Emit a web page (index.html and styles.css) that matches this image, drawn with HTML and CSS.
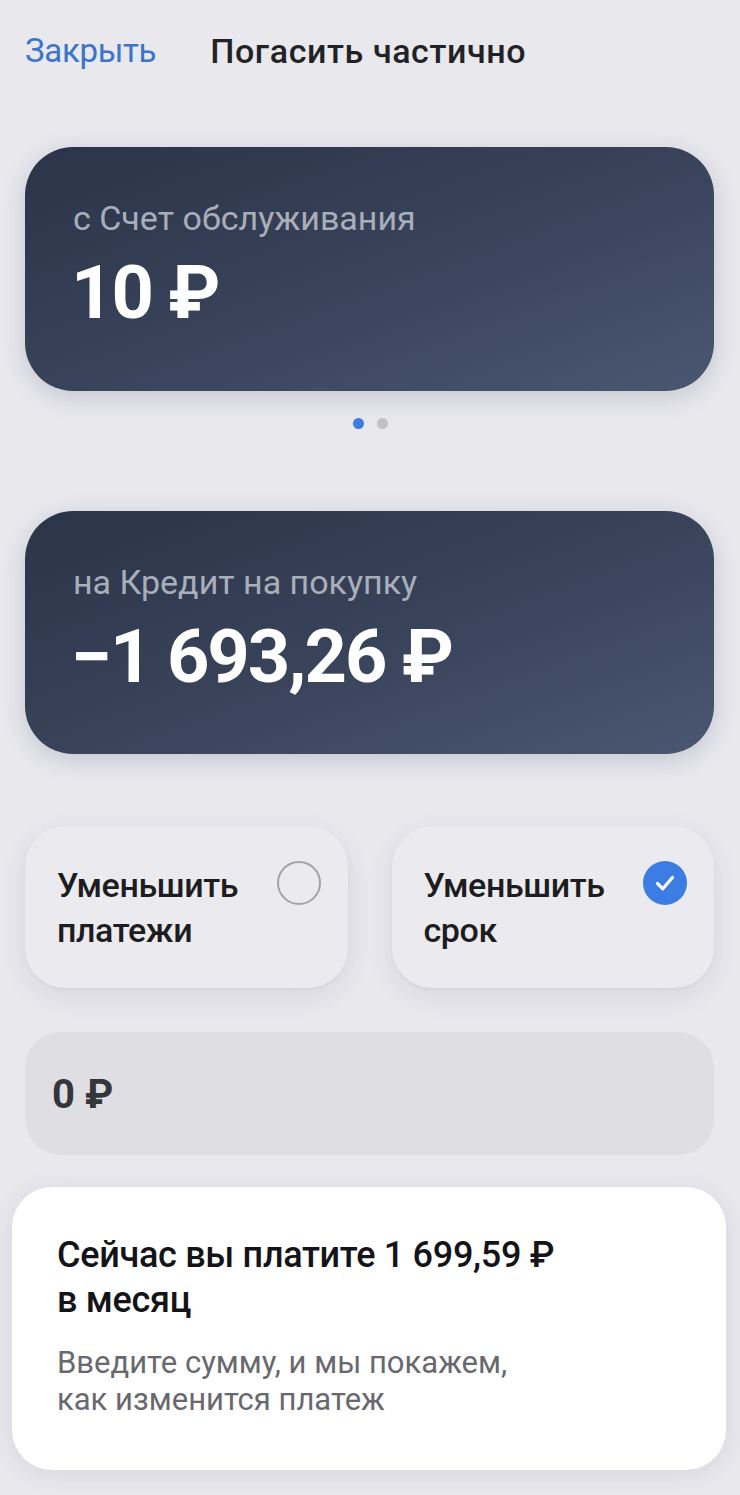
FILE: index.html
```
<!DOCTYPE html>
<html lang="ru">
<head>
<meta charset="utf-8">
<link rel="stylesheet" href="styles.css">
</head>
<body>
<div class="screen">
  <header class="header">
    <span class="close">Закрыть</span>
    <span class="title">Погасить частично</span>
  </header>

  <section class="account-card">
    <div class="account-label">с Счет обслуживания</div>
    <div class="account-amount">10 ₽</div>
  </section>

  <div class="dots">
    <span class="dot dot-active"></span>
    <span class="dot"></span>
  </div>

  <section class="account-card account-card-second">
    <div class="account-label">на Кредит на покупку</div>
    <div class="account-amount">−1 693,26 ₽</div>
  </section>

  <div class="options">
    <div class="option">
      <div class="option-text">Уменьшить<br>платежи</div>
      <span class="radio"></span>
    </div>
    <div class="option">
      <div class="option-text">Уменьшить<br>срок</div>
      <span class="radio radio-checked">
        <svg viewBox="0 0 44 44" width="44" height="44"><path d="M14.5 22.5 L19.8 27.8 L29.5 16.5" fill="none" stroke="#fff" stroke-width="3.2" stroke-linecap="round" stroke-linejoin="round"/></svg>
      </span>
    </div>
  </div>

  <div class="amount-input">0 ₽</div>

  <section class="info-card">
    <div class="info-title">Сейчас вы платите 1 699,59 ₽<br>в месяц</div>
    <div class="info-text">Введите сумму, и мы покажем,<br>как изменится платеж</div>
  </section>
</div>
</body>
</html>
```
FILE: styles.css
```
* { box-sizing: border-box; }
html, body {
  margin: 0;
  padding: 0;
}
body {
  background: #e8e8ed;
  font-family: Roboto, "Noto Sans", "Liberation Sans", sans-serif;
  width: 740px;
  height: 1495px;
  overflow: hidden;
}
.screen {
  display: flex;
  flex-direction: column;
}
.header {
  display: flex;
  align-items: flex-start;
  gap: 54px;
  padding: 31px 25px 0 25px;
  height: 147px;
}
.close {
  font-size: 33px;
  line-height: 40px;
  color: #3b74c9;
  letter-spacing: -0.3px;
}
.title {
  font-size: 34px;
  line-height: 40px;
  font-weight: 500;
  color: #222226;
  letter-spacing: 0.6px;
}
.account-card {
  margin: 0 26px 0 25px;
  height: 244px;
  border-radius: 48px;
  background: linear-gradient(160deg, #2b3448 0%, #384259 50%, #4b5672 100%);
  box-shadow: 0 6px 24px rgba(40, 50, 80, 0.18);
  padding: 51px 40px 0 48px;
  color: #fff;
}
.account-label {
  font-size: 34px;
  line-height: 40px;
  color: #a9aebb;
  letter-spacing: 0;
}
.account-amount {
  margin-top: 15px;
  margin-left: -2px;
  font-size: 74px;
  line-height: 80px;
  font-weight: 700;
  color: #ffffff;
  letter-spacing: -2px;
}
.dots {
  display: flex;
  justify-content: center;
  gap: 13px;
  height: 120px;
  padding-top: 27px;
}
.dot {
  width: 11px;
  height: 11px;
  border-radius: 50%;
  background: #c1c1c6;
}
.dot-active {
  background: #3b7de0;
}
.account-card-second {
  height: 243px;
}
.options {
  display: grid;
  grid-template-columns: 1fr 1fr;
  gap: 44px;
  margin: 72px 26px 0 25px;
}
.option {
  height: 162px;
  border-radius: 40px;
  background: #ebebef;
  box-shadow: 0 8px 26px rgba(60, 60, 90, 0.10), 0 1px 3px rgba(60, 60, 90, 0.05);
  display: flex;
  justify-content: space-between;
  align-items: flex-start;
  padding: 37px 27px 0 32px;
}
.option-text {
  font-size: 34px;
  line-height: 45px;
  font-weight: 500;
  color: #1d1d21;
  letter-spacing: -0.4px;
}
.radio {
  flex: none;
  width: 44px;
  height: 44px;
  border-radius: 50%;
  border: 2px solid #a2a2a8;
  margin-top: -2px;
  display: block;
}
.radio-checked {
  border: none;
  background: #3b7de2;
}
.radio-checked svg {
  display: block;
}
.amount-input {
  margin: 44px 26px 0 25px;
  height: 123px;
  border-radius: 36px;
  background: #dedee3;
  display: flex;
  align-items: center;
  padding: 2px 0 0 27px;
  font-size: 40px;
  font-weight: 700;
  color: #35353a;
}
.info-card {
  margin: 32px 14px 0 12px;
  height: 283px;
  border-radius: 40px;
  background: #ffffff;
  box-shadow: 0 4px 24px rgba(60, 60, 90, 0.10);
  padding: 46px 30px 0 45px;
}
.info-title {
  font-size: 36px;
  line-height: 45px;
  font-weight: 500;
  color: #141418;
  letter-spacing: -0.3px;
}
.info-text {
  margin-top: 21px;
  font-size: 31px;
  line-height: 37px;
  color: #68686e;
  letter-spacing: 0;
}
```
